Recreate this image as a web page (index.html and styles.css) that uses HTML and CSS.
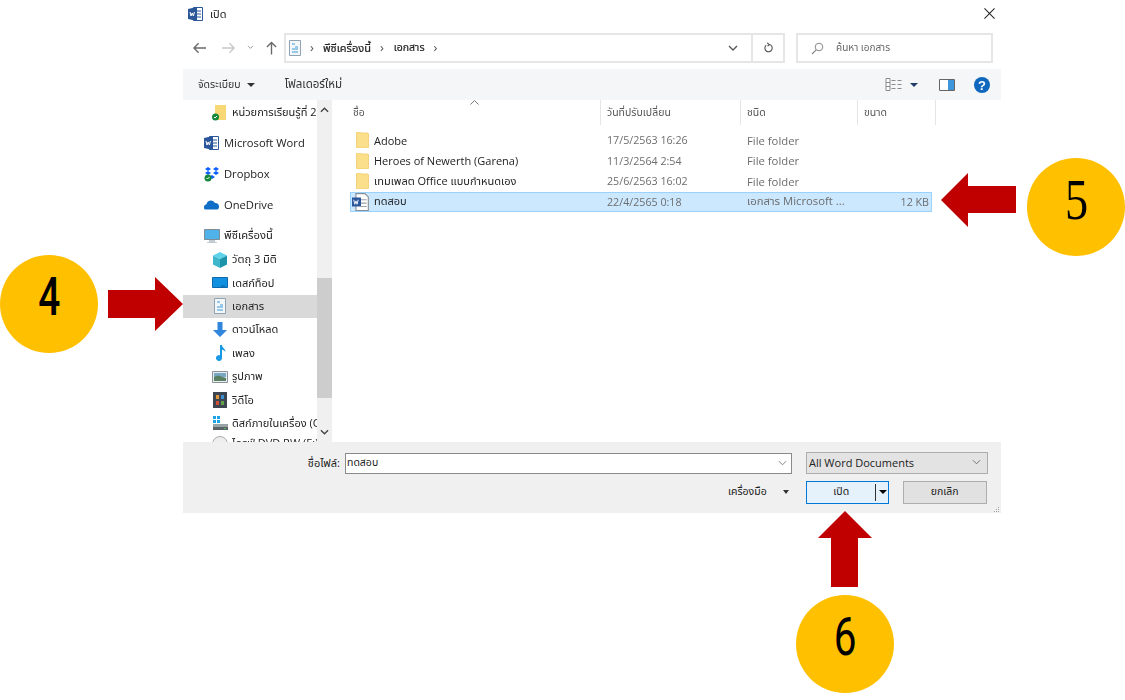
FILE: index.html
```html
<!DOCTYPE html>
<html lang="th">
<head>
<meta charset="utf-8">
<title>เปิด</title>
<link rel="stylesheet" href="styles.css">
</head>
<body>
<div class="dialog">
  <header class="titlebar">
    <svg class="ico16" viewBox="0 0 16 16"><path fill="#fff" stroke="#2b579a" d="M5.500 1.500h9v13h-9z"/><path stroke="#2b579a" d="M9 5h4M9 8h4M9 11h4"/><path fill="#2b579a" d="M0 3l9-2v14l-9-2z"/><path fill="none" stroke="#fff" d="M2 6l1 4 1.200-3 1.200 3 1-4"/></svg>
    <span class="title-text">เปิด</span>
    <svg class="close" viewBox="0 0 12 12"><path stroke="#222" stroke-width="1.100" d="M.5.5l11 11M11.500.5l-11 11"/></svg>
  </header>

  <nav class="navbar">
    <svg class="nav-ico first" viewBox="0 0 14 12"><path fill="none" stroke="#6a6a6a" stroke-width="1.500" d="M14 6H1M6 1L1 6l5 5"/></svg>
    <svg class="nav-ico fwd" viewBox="0 0 14 12"><path fill="none" stroke="#c9c9c9" stroke-width="1.500" d="M0 6h13M8 1l5 5-5 5"/></svg>
    <svg class="nav-chev" viewBox="0 0 8 6"><path fill="none" stroke="#888" d="M1 1l3 3 3-3"/></svg>
    <svg class="nav-ico up" viewBox="0 0 12 14"><path fill="none" stroke="#6a6a6a" stroke-width="1.500" d="M6 14V1M1 6l5-5 5 5"/></svg>
    <div class="address">
      <svg class="ico-doc" viewBox="0 0 12 16"><path fill="#f4f7fa" stroke="#8ea3b3" d="M.5.5h11v15H.5z"/><path stroke="#3a9ad9" d="M3 4h3M6 7h3M3 9h6M3 12h6"/></svg>
      <span class="crumb-sep">›</span><span class="crumb">พีซีเครื่องนี้</span><span class="crumb-sep">›</span><span class="crumb">เอกสาร</span><span class="crumb-sep">›</span>
      <span class="addr-drop"><svg class="chev" viewBox="0 0 10 6"><path fill="none" stroke="#555" stroke-width="1.300" d="M1 1l4 4 4-4"/></svg></span>
      <span class="addr-refresh"><svg class="refresh" viewBox="0 0 12 12"><path fill="none" stroke="#555" stroke-width="1.200" d="M7 2.200A4 4 0 1 1 3.500 3M4.500 .5L7 2.200 5 4"/></svg></span>
    </div>
    <div class="search">
      <svg class="search-ico" viewBox="0 0 13 13"><circle cx="8" cy="5" r="3.800" fill="none" stroke="#888"/><path stroke="#888" stroke-width="1.200" d="M5.200 7.800L1 12"/></svg>
      <span>ค้นหา เอกสาร</span>
    </div>
  </nav>

  <div class="toolbar">
    <span class="tool-label">จัดระเบียบ</span><i class="caret dark"></i>
    <span class="tool-label newfolder">โฟลเดอร์ใหม่</span>
    <div class="tool-right">
      <svg class="views" viewBox="0 0 17 13"><path fill="#fff" stroke="#8b8b8b" d="M.5.500h4v12h-4z"/><path stroke="#8b8b8b" d="M.5 4.500h4M.5 8.500h4M6 2.500h4M12 2.500h4M6 6.500h4M12 6.500h4M6 10.500h4M12 10.500h4"/></svg>
      <i class="caret navy"></i>
      <svg class="pane" viewBox="0 0 16 12"><path fill="#fff" stroke="#666" d="M.5.500h15v11H.5z"/><path fill="#3e96dc" d="M9 1h6v10H9z"/></svg>
      <svg class="help" viewBox="0 0 16 16"><circle cx="8" cy="8" r="8" fill="#0f68bd"/><text x="8" y="12.500" class="help-q">?</text></svg>
    </div>
  </div>

  <div class="main">
    <aside class="sidebar">
      <ul class="tree">
        <li class="node n-first l2"><svg class="ti" viewBox="0 0 16 16"><path fill="#f8d775" d="M3 0h11v15H3z"/><circle cx="3.500" cy="12" r="3.500" fill="#13883a"/><path stroke="#fff" fill="none" d="M2 12l1 1 2-2"/></svg>หน่วยการเรียนรู้ที่ 2</li>
        <li class="node l1"><svg class="ti" viewBox="0 0 16 16"><path fill="#fff" stroke="#2b579a" d="M5.500 1.500h9v13h-9z"/><path stroke="#2b579a" d="M9 5h4M9 8h4M9 11h4"/><path fill="#2b579a" d="M0 3l9-2v14l-9-2z"/><path fill="none" stroke="#fff" d="M2 6l1 4 1.200-3 1.200 3 1-4"/></svg>Microsoft Word</li>
        <li class="node l1"><svg class="ti" viewBox="0 0 16 16"><path fill="#0b60ff" d="M4 1l3 2-3 2-3-2zM12 1l3 2-3 2-3-2zM4 5l3 2-3 2-3-2zM12 5l3 2-3 2-3-2zM8 9l3 2-3 2-3-2z"/><circle cx="4" cy="12" r="3.500" fill="#13883a"/><path stroke="#fff" fill="none" d="M2.500 12l1 1 2-2"/></svg>Dropbox</li>
        <li class="node l1"><svg class="ti" viewBox="0 0 16 16"><path fill="#0f6fc6" d="M1 12.500a3 3 0 0 1 1.500-5.300A4.500 4.500 0 0 1 11 6a3.500 3.500 0 0 1 4 3.500 3 3 0 0 1-1.500 3z"/></svg>OneDrive</li>
        <li class="node l1 n-pc"><svg class="ti" viewBox="0 0 16 16"><path fill="#4fb3ea" stroke="#7d8b96" d="M.5 1.500h15v10H.5z"/><path fill="#c3ccd3" d="M5 12h6v2h2v1H3v-1h2z"/></svg>พีซีเครื่องนี้</li>
        <li class="node l2"><svg class="ti" viewBox="0 0 16 16"><path fill="#5ed3ea" d="M1 3.500L8 0l7 3.500L8 7z"/><path fill="#3fb7ca" d="M1 3.500L8 7v9l-7-3.500z"/><path fill="#1c93a8" d="M15 3.500L8 7v9l7-3.500z"/></svg>วัตถุ 3 มิติ</li>
        <li class="node l2"><svg class="ti" viewBox="0 0 16 16"><path fill="#1291e0" stroke="#0d69ad" d="M.5 2.500h15v10H.5z"/><path stroke="#0d5c99" d="M9 11h4"/></svg>เดสก์ท็อป</li>
        <li class="node l2 sel"><svg class="ti" viewBox="0 0 12 16"><path fill="#f4f7fa" stroke="#8ea3b3" d="M.5.500h11v15H.5z"/><path stroke="#3a9ad9" d="M3 4h3M6 7h3M3 9h6M3 12h6"/></svg>เอกสาร</li>
        <li class="node l2"><svg class="ti" viewBox="0 0 16 16"><path fill="#2f86dc" d="M5.500 0h5v8H15l-7 7-7-7h4.500z"/></svg>ดาวน์โหลด</li>
        <li class="node l2"><svg class="ti" viewBox="0 0 16 16"><path fill="#1a9ae6" d="M8 0h2c0 3 3.500 3.500 3.500 7-1-1.500-2-2-3.500-2.300V13a3 3 0 1 1-2-2.800z"/></svg>เพลง</li>
        <li class="node l2"><svg class="ti" viewBox="0 0 16 16"><path fill="#e9eef1" stroke="#8b9297" d="M.5 2.500h15v11H.5z"/><path fill="#7aa7c4" d="M2 4h12v4H2z"/><path fill="#5b7f62" d="M2 8l4-1.500L14 9v3H2z"/></svg>รูปภาพ</li>
        <li class="node l2"><svg class="ti" viewBox="0 0 16 16"><path fill="#3d4650" d="M1 0h14v16H1z"/><path fill="#e0973a" d="M4 3h3v4H4z"/><path fill="#3a8fd0" d="M9 3h3v4H9z"/><path fill="#d04f3a" d="M4 9h3v4H4z"/><path fill="#64a44a" d="M9 9h3v4H9z"/></svg>วิดีโอ</li>
        <li class="node l2"><svg class="ti" viewBox="0 0 16 16"><path fill="#1aa3e8" d="M1 1h3v3H1zM5 1h3v3H5zM1 5h3v3H1zM5 5h3v3H5z"/><path fill="#9aa3a8" d="M1 9h15v3H1z"/><path fill="#5a6368" d="M1 12h15v3H1z"/><path fill="#4bc24b" d="M12 13h2v1h-2z"/></svg>ดิสก์ภายในเครื่อง (C:)</li>
        <li class="node l2 n-last"><svg class="ti" viewBox="0 0 16 16"><circle cx="8" cy="8" r="7.500" fill="#eee" stroke="#aaa"/></svg>ไดรฟ์ DVD RW (E:)</li>
      </ul>
      <div class="scrollbar">
        <svg class="sb-arrow" viewBox="0 0 10 6"><path fill="none" stroke="#444" stroke-width="1.500" d="M1 5l4-4 4 4"/></svg>
        <div class="sb-track"><div class="sb-thumb"></div></div>
        <svg class="sb-arrow" viewBox="0 0 10 6"><path fill="none" stroke="#444" stroke-width="1.500" d="M1 1l4 4 4-4"/></svg>
      </div>
    </aside>

    <section class="files">
      <div class="file-head">
        <span class="hcell">ชื่อ</span>
        <span class="hcell">วันที่ปรับเปลี่ยน</span>
        <span class="hcell">ชนิด</span>
        <span class="hcell">ขนาด</span>
        <svg class="sort" viewBox="0 0 9 5"><path fill="none" stroke="#777" d="M.5 4.500l4-4 4 4"/></svg>
      </div>
      <div class="file-list">
        <div class="row">
          <span class="cell name"><svg class="fi" viewBox="0 0 15 16"><path fill="#fbdf8a" stroke="#eec65c" stroke-width=".7" d="M1.500 1a1 1 0 0 1 1-1h3l1 1h6a1 1 0 0 1 1 1v13a1 1 0 0 1-1 1h-10a1 1 0 0 1-1-1z"/></svg>Adobe</span>
          <span class="cell meta date">17/5/2563 16:26</span><span class="cell meta">File folder</span><span class="cell meta size"></span>
        </div>
        <div class="row">
          <span class="cell name"><svg class="fi" viewBox="0 0 15 16"><path fill="#fbdf8a" stroke="#eec65c" stroke-width=".7" d="M1.500 1a1 1 0 0 1 1-1h3l1 1h6a1 1 0 0 1 1 1v13a1 1 0 0 1-1 1h-10a1 1 0 0 1-1-1z"/></svg>Heroes of Newerth (Garena)</span>
          <span class="cell meta date">11/3/2564 2:54</span><span class="cell meta">File folder</span><span class="cell meta size"></span>
        </div>
        <div class="row">
          <span class="cell name"><svg class="fi" viewBox="0 0 15 16"><path fill="#fbdf8a" stroke="#eec65c" stroke-width=".7" d="M1.500 1a1 1 0 0 1 1-1h3l1 1h6a1 1 0 0 1 1 1v13a1 1 0 0 1-1 1h-10a1 1 0 0 1-1-1z"/></svg>เทมเพลต Office แบบกำหนดเอง</span>
          <span class="cell meta date">25/6/2563 16:02</span><span class="cell meta">File folder</span><span class="cell meta size"></span>
        </div>
        <div class="row selected">
          <span class="cell name"><svg class="fi word" viewBox="0 0 16 16"><path fill="#fff" stroke="#8a8f94" d="M3.500 .5h8l3 3v12h-11z"/><path stroke="#9aa0a5" d="M8 6h5M8 9h5M8 12h5"/><path fill="#2b579a" d="M0 4h8v8H0z"/><path fill="none" stroke="#fff" stroke-width=".8" d="M1.500 6l1 4 1-3 1 3 1-4"/></svg>ทดสอบ</span>
          <span class="cell meta date">22/4/2565 0:18</span><span class="cell meta">เอกสาร Microsoft ...</span><span class="cell meta size">12 KB</span>
        </div>
      </div>
    </section>
  </div>

  <footer class="footer">
    <div class="foot-row">
      <label class="foot-label">ชื่อไฟล์:</label>
      <div class="name-input"><span>ทดสอบ</span><svg class="chev-s" viewBox="0 0 10 6"><path fill="none" stroke="#777" d="M1 1l4 4 4-4"/></svg></div>
      <div class="type-select"><span>All Word Documents</span><svg class="chev-s" viewBox="0 0 10 6"><path fill="none" stroke="#666" d="M1 1l4 4 4-4"/></svg></div>
    </div>
    <div class="foot-row actions">
      <span class="tools">เครื่องมือ</span><i class="caret dark small"></i>
      <div class="btn primary"><span class="btn-text">เปิด</span><span class="split"></span><i class="caret black"></i></div>
      <div class="btn cancel">ยกเลิก</div>
    </div>
    <svg class="grip" viewBox="0 0 6 6"><path fill="#a5a5a5" d="M4 0h1v1H4zM2 2h1v1H2zM4 2h1v1H4zM0 4h1v1H0zM2 4h1v1H2zM4 4h1v1H4z"/></svg>
  </footer>
</div>

<div class="badge b4"><span class="digit d4">4</span></div>
<div class="badge b5"><span class="digit d5">5</span></div>
<div class="badge b6"><span class="digit">6</span></div>
<svg class="arrow a4" viewBox="0 0 75 54"><path fill="#c00000" d="M0 13h47V0l28 27-28 27V41H0z"/></svg>
<svg class="arrow a5" viewBox="0 0 75 54"><path fill="#c00000" d="M75 13H27V0L0 27l27 27V40h48z"/></svg>
<svg class="arrow a6" viewBox="0 0 54 76"><path fill="#c00000" d="M13 76V27H0L27 0l27 27H40v49z"/></svg>
</body>
</html>
```

FILE: styles.css
```css
* { box-sizing: border-box; }
html, body { margin: 0; padding: 0; background: #fff; }
body {
  position: relative;
  width: 1125px;
  height: 700px;
  overflow: hidden;
  font-family: "Open Sans", "Noto Sans", "Noto Sans Thai", "DejaVu Sans", sans-serif;
  font-size: 11px;
  color: #1b1b1b;
}
ul { list-style: none; margin: 0; padding: 0; }

.dialog {
  width: 818px;
  margin-left: 183px;
  filter: blur(0.5px);
}

.titlebar { height: 28px; display: flex; align-items: center; padding-left: 5px; }
.ico16 { width: 16px; height: 16px; flex: none; }
.title-text { margin-left: 6px; }
.close { width: 11px; height: 11px; margin-left: auto; margin-right: 6px; margin-top: -2px; }

.navbar { height: 41px; display: flex; align-items: flex-start; padding-top: 5px; }
.nav-ico { width: 13px; height: 12px; margin-top: 9px; flex: none; }
.nav-ico.first { margin-left: 10px; }
.nav-ico.fwd { margin-left: 16px; }
.nav-chev { width: 7px; height: 5px; margin: 12px 0 0 12px; flex: none; }
.nav-ico.up { margin-left: 12px; width: 11px; height: 14px; margin-top: 8px; }

.address {
  margin-left: 7px;
  width: 501px;
  height: 30px;
  border: 2px solid #e6e6e6;
  display: flex;
  align-items: center;
  padding-left: 3px;
  flex: none;
}
.ico-doc { width: 12px; height: 16px; flex: none; }
.crumb { color: #222; margin: 0 9px; font-size: 11px; -webkit-text-stroke: 0.2px #222; }
.crumb-sep { color: #555; margin-left: 0; font-size: 13px; line-height: 1; margin-top: -2px; }
.ico-doc + .crumb-sep { margin-left: 9px; }
.crumb + .crumb-sep + .crumb { font-size: 10.500px; margin-left: 10px; }
.addr-drop { margin-left: auto; width: 31px; height: 100%; display: flex; align-items: center; padding-left: 8px; }
.chev { width: 10px; height: 6px; }
.addr-refresh {
  width: 32px; height: 100%;
  border-left: 2px solid #e6e6e6;
  display: flex; align-items: center; justify-content: center;
}
.refresh { width: 11px; height: 12px; }

.search {
  margin-left: 11px;
  width: 197px;
  height: 30px;
  border: 2px solid #e6e6e6;
  display: flex;
  align-items: center;
  padding-left: 13px;
  gap: 12px;
  color: #666;
  font-size: 10px;
  flex: none;
}
.search-ico { width: 13px; height: 13px; flex: none; }

.toolbar {
  height: 31px;
  background: #f5f6f7;
  display: flex;
  align-items: center;
  padding-left: 15px;
  color: #333;
}
.tool-label { font-size: 10.500px; }
.newfolder { margin-left: 30px; font-size: 11.500px; }
.caret {
  display: inline-block;
  width: 0; height: 0;
  border-left: 4px solid transparent;
  border-right: 4px solid transparent;
  border-top: 4px solid #333;
  margin-left: 6px;
}
.caret.navy { border-top-color: #1f3d66; margin-left: 7px; }
.caret.small { border-left-width: 3.500px; border-right-width: 3.500px; margin-left: 16px; }
.caret.black { border-top-color: #000; margin-left: 3px; }
.tool-right { margin-left: auto; display: flex; align-items: center; padding-right: 11px; }
.views { width: 18px; height: 13px; }
.pane { width: 16px; height: 12px; margin-left: 21px; }
.help { width: 16px; height: 16px; margin-left: 19px; }
.help-q { font: bold 13px "Liberation Sans", sans-serif; fill: #fff; text-anchor: middle; }

.main { height: 342px; display: flex; }

.sidebar { width: 150px; display: flex; flex: none; overflow: hidden; }
.tree { width: 134px; height: 342px; overflow: hidden; flex: none; }
.node {
  height: 23.400px;
  display: flex;
  align-items: center;
  white-space: nowrap;
  overflow: hidden;
  color: #222;
}
.node .ti { width: 16px; height: 16px; flex: none; margin-right: 4px; }
.l1 { height: 31px; padding-left: 21px; font-size: 11.200px; }
.l2 { padding-left: 29px; }
.n-first { height: 27px; padding-bottom: 2px; }
.n-pc { height: 28px; padding-top: 3px; }
.n-last { padding-bottom: 6px; }
.sel { background: #d9d9d9; }
.scrollbar {
  width: 15px;
  background: #f0f0f0;
  display: flex;
  flex-direction: column;
  align-items: center;
  flex: none;
}
.sb-arrow { width: 9px; height: 6px; margin: 7px 0; flex: none; }
.sb-track { flex: 1; width: 100%; padding-top: 158px; }
.sb-thumb { height: 120px; background: #cdcdcd; }

.files { flex: 1; padding-left: 14px; position: relative; }
.file-head {
  height: 25px;
  display: grid;
  grid-template-columns: 254px 140px 117px 78px;
  color: #555;
  font-size: 10.500px;
}
.hcell {
  display: flex;
  align-items: center;
  padding-left: 6px;
  padding-top: 1px;
  border-right: 1px solid #e5e5e5;
}
.sort { position: absolute; left: 137px; top: 0; width: 9px; height: 5px; }
.file-list { padding: 5px 0 0 3px; }
.row {
  width: 582px;
  height: 20.500px;
  display: grid;
  grid-template-columns: 251px 140px 117px 74px;
  align-items: center;
  border: 1px solid transparent;
  margin-left: 0;
}
.row.selected { background: #cce8ff; border-color: #99d1ff; }
.cell { padding-left: 5px; white-space: nowrap; overflow: hidden; }
.name { display: flex; align-items: center; font-size: 11px; color: #222; padding-left: 4px; }
.fi { width: 15px; height: 16px; margin-right: 4px; flex: none; }
.fi.word { width: 18px; height: 18px; margin-left: -3px; margin-right: 4px; }
.meta { color: #6d6d6d; font-size: 11.300px; }
.date { font-size: 10.700px; }
.size { text-align: right; padding-right: 4px; font-size: 10.700px; }

.footer {
  height: 71px;
  background: #f0f0f0;
  padding-top: 10px;
  position: relative;
}
.foot-row { display: flex; align-items: center; height: 22px; }
.foot-label { width: 157px; text-align: right; color: #222; font-size: 11px; }
.name-input {
  margin-left: 5px;
  width: 447px;
  height: 21px;
  background: #fff;
  border: 1px solid #8a8a8a;
  display: flex;
  align-items: center;
  justify-content: space-between;
  padding: 0 4px 0 1px;
  font-size: 10.500px;
}
.chev-s { width: 9px; height: 6px; }
.type-select {
  margin-left: 14px;
  width: 182px;
  height: 22px;
  background: #e3e3e3;
  border: 1px solid #adadad;
  display: flex;
  align-items: center;
  justify-content: space-between;
  padding: 0 6px 2px 2px;
  font-family: "Open Sans", sans-serif;
  font-size: 11px;
  color: #222;
}
.actions { margin-top: 7px; }
.tools { margin-left: 545px; font-size: 10.500px; color: #222; }
.btn {
  height: 23px;
  display: flex;
  align-items: center;
  justify-content: center;
  font-size: 10.500px;
  color: #222;
}
.primary {
  margin-left: 17px;
  width: 83px;
  background: #e5f1fb;
  border: 1.500px solid #0078d7;
  position: relative;
}
.btn-text { margin-left: 0; width: 68px; text-align: center; }
.split { width: 1px; height: 17px; background: #333; }
.cancel { margin-left: 14px; width: 84px; background: #e1e1e1; border: 1px solid #adadad; }
.grip { position: absolute; right: 1px; bottom: 0; width: 6px; height: 6px; }

.badge {
  position: absolute;
  width: 98px;
  height: 98px;
  border-radius: 50%;
  background: #ffc000;
  display: flex;
  align-items: center;
  justify-content: center;
  padding-bottom: 14px;
}
.digit {
  font-family: "Roboto", "Liberation Sans", sans-serif;
  font-size: 54px;
  line-height: 1;
  color: #000;
  transform: scaleX(0.75);
}
.d4 { font-weight: 500; transform: scaleX(0.72); }
.d5 { font-family: "Liberation Serif", serif; font-size: 58px; font-weight: 400; transform: scaleX(0.8); }
.b4 { left: 0; top: 255px; }
.b5 { left: 1027px; top: 158px; }
.b6 { left: 796px; top: 595px; }
.arrow { position: absolute; }
.a4 { left: 108px; top: 277px; width: 75px; height: 54px; }
.a5 { left: 941px; top: 173px; width: 75px; height: 54px; }
.a6 { left: 818px; top: 511px; width: 54px; height: 76px; }
```
